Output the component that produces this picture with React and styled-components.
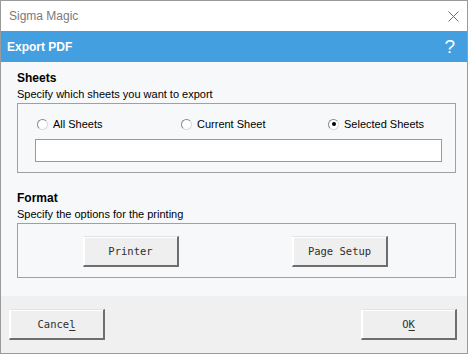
import React from "react";
import styled, { createGlobalStyle } from "styled-components";

const GlobalStyle = createGlobalStyle`
  body {
    margin: 0;
    background: #ffffff;
    font-family: "Liberation Sans", Arial, sans-serif;
  }
`;

const App = () => {
  return (
    <>
      <GlobalStyle />
      <Window>
        <TitleBar>
          <span>Sigma Magic</span>
          <svg width="11" height="11" viewBox="0 0 11 11">
            <path d="M0.5 0.5 L10.5 10.5 M10.5 0.5 L0.5 10.5" stroke="#6f6f6f" strokeWidth="1" />
          </svg>
        </TitleBar>
        <Header>
          <span>Export PDF</span>
          <Help>?</Help>
        </Header>
        <Body>
          <SectionTitle>Sheets</SectionTitle>
          <SectionHint>Specify which sheets you want to export</SectionHint>
          <GroupBox>
            <RadioRow>
              <RadioOption $w={144}>
                <Radio />
                All Sheets
              </RadioOption>
              <RadioOption $w={147}>
                <Radio />
                Current Sheet
              </RadioOption>
              <RadioOption>
                <Radio $checked />
                Selected Sheets
              </RadioOption>
            </RadioRow>
            <TextField />
          </GroupBox>

          <SectionTitle $top={17}>Format</SectionTitle>
          <SectionHint>Specify the options for the printing</SectionHint>
          <GroupBox>
            <ButtonRow>
              <Button>Printer</Button>
              <Button>Page Setup</Button>
            </ButtonRow>
          </GroupBox>
        </Body>
        <Footer>
          <Button>
            Cance<u>l</u>
          </Button>
          <Button>
            O<u>K</u>
          </Button>
        </Footer>
      </Window>
    </>
  );
};

const Window = styled.div`
  width: 468px;
  height: 354px;
  box-sizing: border-box;
  border: 1px solid #9b9b9b;
  display: flex;
  flex-direction: column;
  background: #f0f0f0;
`;

const TitleBar = styled.div`
  height: 30px;
  flex-shrink: 0;
  background: #ffffff;
  display: flex;
  align-items: center;
  justify-content: space-between;
  padding: 0 8px 0 8px;
  font-size: 12px;
  color: #7a7a7a;
`;

const Header = styled.div`
  height: 31px;
  flex-shrink: 0;
  background: #439fe0;
  color: #ffffff;
  display: flex;
  align-items: center;
  justify-content: space-between;
  padding: 0 12px 0 6px;
  font-size: 12px;
  font-weight: 700;
`;

const Help = styled.span`
  font-size: 19px;
  font-weight: 400;
  line-height: 1;
`;

const Body = styled.div`
  flex: 1;
  background: #f7f8fa;
  padding: 8px 11px 0 16px;
  font-size: 11px;
  color: #000000;
`;

const SectionTitle = styled.div`
  font-weight: 700;
  font-size: 12px;
  line-height: 16px;
  margin-top: ${(p) => p.$top || 0}px;
`;

const SectionHint = styled.div`
  line-height: 16px;
  font-size: 11px;
`;

const GroupBox = styled.div`
  border: 1px solid #a0a0a0;
  margin-top: 1px;
  padding: 12px 13px 10px 17px;
`;

const RadioRow = styled.div`
  display: flex;
  align-items: center;
  padding-left: 2px;
  height: 16px;
  margin-bottom: 7px;
`;

const RadioOption = styled.label`
  display: flex;
  align-items: center;
  gap: 5px;
  width: ${(p) => (p.$w ? `${p.$w}px` : "auto")};
  line-height: 16px;
  font-size: 11px;
`;

const Radio = styled.span`
  width: 11px;
  height: 11px;
  box-sizing: border-box;
  border-radius: 50%;
  border: 1px solid #8a8a8a;
  border-bottom-color: #d8d8d8;
  border-right-color: #d8d8d8;
  background: #ffffff;
  display: inline-flex;
  align-items: center;
  justify-content: center;
  &::after {
    content: "";
    width: 4px;
    height: 4px;
    border-radius: 50%;
    background: #000000;
    display: ${(p) => (p.$checked ? "block" : "none")};
  }
`;

const TextField = styled.div`
  height: 23px;
  box-sizing: border-box;
  border: 1px solid #9a9a9a;
  background: #ffffff;
`;

const ButtonRow = styled.div`
  display: flex;
  gap: 113px;
  padding-left: 48px;
`;

const Button = styled.button`
  width: 96px;
  height: 31px;
  box-sizing: border-box;
  background: #efefef;
  border-style: solid;
  border-width: 1px 2px 2px 1px;
  border-color: #e2e2e2 #6e6e6e #6e6e6e #ffffff;
  box-shadow: inset 1px 1px 0 #ffffff;
  font-family: "DejaVu Sans Mono", "Liberation Mono", monospace;
  font-size: 10.5px;
  color: #2e2e2e;
  padding: 0;
  u {
    text-underline-offset: 2px;
  }
`;

const Footer = styled.div`
  height: 57px;
  flex-shrink: 0;
  display: flex;
  align-items: center;
  justify-content: space-between;
  padding: 0 10px 0 8px;
  box-sizing: border-box;
`;

export default App;
